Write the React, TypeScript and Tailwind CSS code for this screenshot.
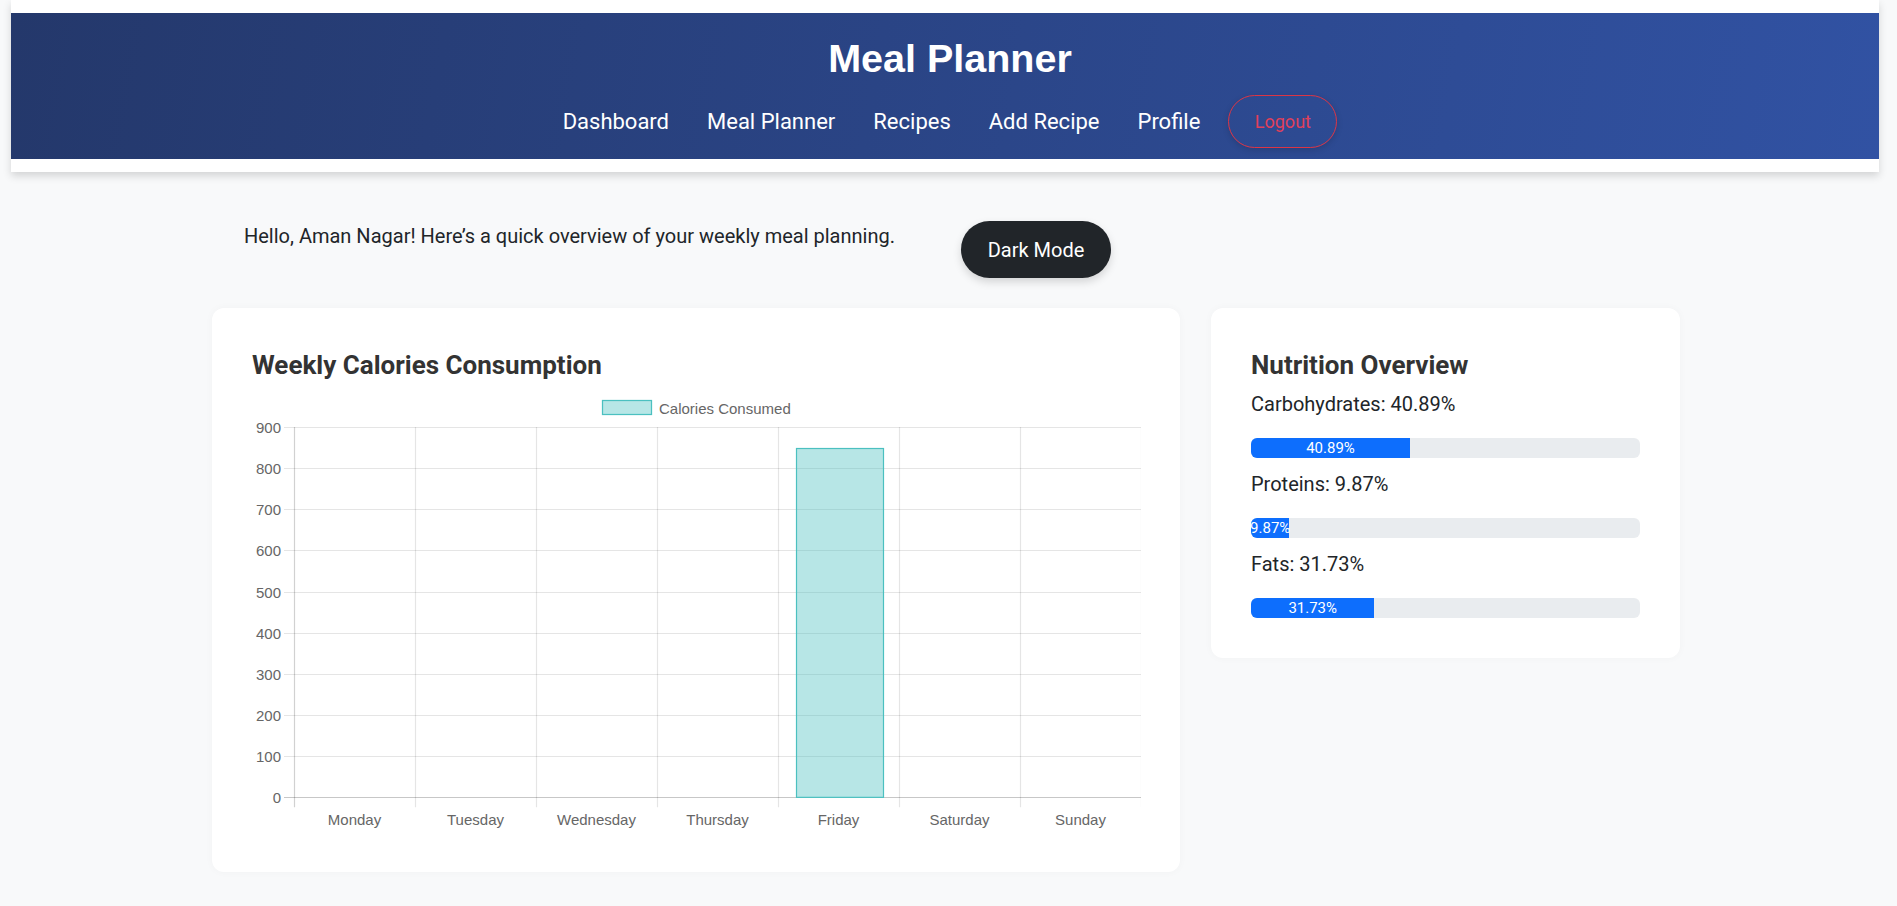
import React from "react";

const days = ["Monday", "Tuesday", "Wednesday", "Thursday", "Friday", "Saturday", "Sunday"];
const yVals = [900, 800, 700, 600, 500, 400, 300, 200, 100, 0];

function Chart() {
  const x0 = 42;
  const colW = 121;
  const top = 39;
  const step = 41.15;
  const zeroY = top + 9 * step;
  return (
    <svg width="889" height="444" viewBox="0 0 889 444" className="block">
      <g fontFamily="'Liberation Sans', Arial, sans-serif" fontSize="15" fill="#666">
        <rect x="350.5" y="12.5" width="49" height="14" fill="rgba(75,192,192,0.4)" stroke="rgb(75,192,192)" strokeWidth="1.25" />
        <text x="407" y="25.5">Calories Consumed</text>
      </g>
      {yVals.map((v, i) => {
        const y = Math.round(top + i * step) + 0.5;
        return (
          <g key={v}>
            <line x1="32" x2="889" y1={y} y2={y} stroke={v === 0 ? "rgba(0,0,0,0.22)" : "rgba(0,0,0,0.1)"} strokeWidth="1.2" />
            <text x="29" y={y + 5} textAnchor="end" fontFamily="'Liberation Sans', Arial, sans-serif" fontSize="15" fill="#666">
              {v}
            </text>
          </g>
        );
      })}
      {Array.from({ length: 8 }).map((_, k) => {
        const x = x0 + k * colW + 0.5;
        return (
          <line key={k} x1={x} x2={x} y1={top} y2={zeroY + 10} stroke={k === 0 ? "rgba(0,0,0,0.18)" : "rgba(0,0,0,0.1)"} strokeWidth="1.2" />
        );
      })}
      <rect x="544.5" y="60.5" width="87" height={zeroY - 60.5} fill="rgba(75,192,192,0.4)" stroke="rgb(75,192,192)" strokeWidth="1.2" />
      {days.map((d, k) => (
        <text key={d} x={x0 + k * colW + colW / 2} y="436.5" textAnchor="middle" fontFamily="'Liberation Sans', Arial, sans-serif" fontSize="15" fill="#666">
          {d}
        </text>
      ))}
    </svg>
  );
}

function Bar({ label, w }: { label: string; w: string }) {
  return (
    <div className="mt-[19px] h-[20px] w-full overflow-hidden rounded-[6px] bg-[#e9ecef]">
      <div className={`flex h-full items-center justify-center whitespace-nowrap bg-[#0d6efd] text-[15px] leading-none text-white ${w}`}>
        {label}
      </div>
    </div>
  );
}

export default function App() {
  const font = "font-['Roboto','Noto_Sans',sans-serif]";
  return (
    <div className={`min-h-[906px] bg-[#f8f9fa] ${font} text-[#212529]`}>
      <div className="ml-[11px] mr-[18px] bg-white py-[13px] shadow-[0_4px_8px_rgba(0,0,0,0.15)]">
        <div className="flex h-[146px] flex-col items-center bg-[linear-gradient(100deg,#24386b,#3152a3)] pl-[10px]">
          <h1 className="mt-[22px] font-['Liberation_Sans',Arial,sans-serif] text-[39.5px] font-bold leading-[47px] text-white">
            Meal Planner
          </h1>
          <nav className="mt-[13px] flex items-center text-[22px] text-white">
            <a className="mr-[38px]">Dashboard</a>
            <a className="mr-[38px]">Meal Planner</a>
            <a className="mr-[38px]">Recipes</a>
            <a className="mr-[38px]">Add Recipe</a>
            <a className="mr-[28px]">Profile</a>
            <button className="flex h-[53px] w-[109px] items-center justify-center rounded-full border border-[#dc3545] text-[18px] text-[#e0405a] shadow-[0_2px_6px_rgba(0,0,0,0.15)]">
              Logout
            </button>
          </nav>
        </div>
      </div>

      <div className="ml-[212px] w-[1468px]">
        <div className="mt-[49px] flex items-start pl-[32px]">
          <p className="w-[717px] text-[20px] leading-[30px]">
            Hello, Aman Nagar! Here’s a quick overview of your weekly meal planning.
          </p>
          <button className="h-[57px] w-[150px] rounded-full bg-[#212529] text-[20px] text-white shadow-[0_4px_8px_rgba(0,0,0,0.15)]">
            Dark Mode
          </button>
        </div>

        <div className="mt-[30px] flex items-start gap-[31px]">
          <div className="h-[564px] w-[968px] rounded-[12px] bg-white p-[40px] shadow-[0_0_8px_rgba(0,0,0,0.03)]">
            <h2 className="mt-[2px] text-[26px] font-bold leading-[30px] text-[#333]">Weekly Calories Consumption</h2>
            <div className="mt-[8px]">
              <Chart />
            </div>
          </div>

          <div className="w-[469px] rounded-[12px] bg-white p-[40px] shadow-[0_0_8px_rgba(0,0,0,0.03)]">
            <h2 className="mt-[2px] text-[26px] font-bold leading-[30px] text-[#333]">Nutrition Overview</h2>
            <p className="mt-[9px] text-[20px] leading-[30px]">Carbohydrates: 40.89%</p>
            <Bar label="40.89%" w="w-[40.89%]" />
            <p className="mt-[11px] text-[20px] leading-[30px]">Proteins: 9.87%</p>
            <Bar label="9.87%" w="w-[9.87%]" />
            <p className="mt-[11px] text-[20px] leading-[30px]">Fats: 31.73%</p>
            <Bar label="31.73%" w="w-[31.73%]" />
          </div>
        </div>
      </div>
    </div>
  );
}
